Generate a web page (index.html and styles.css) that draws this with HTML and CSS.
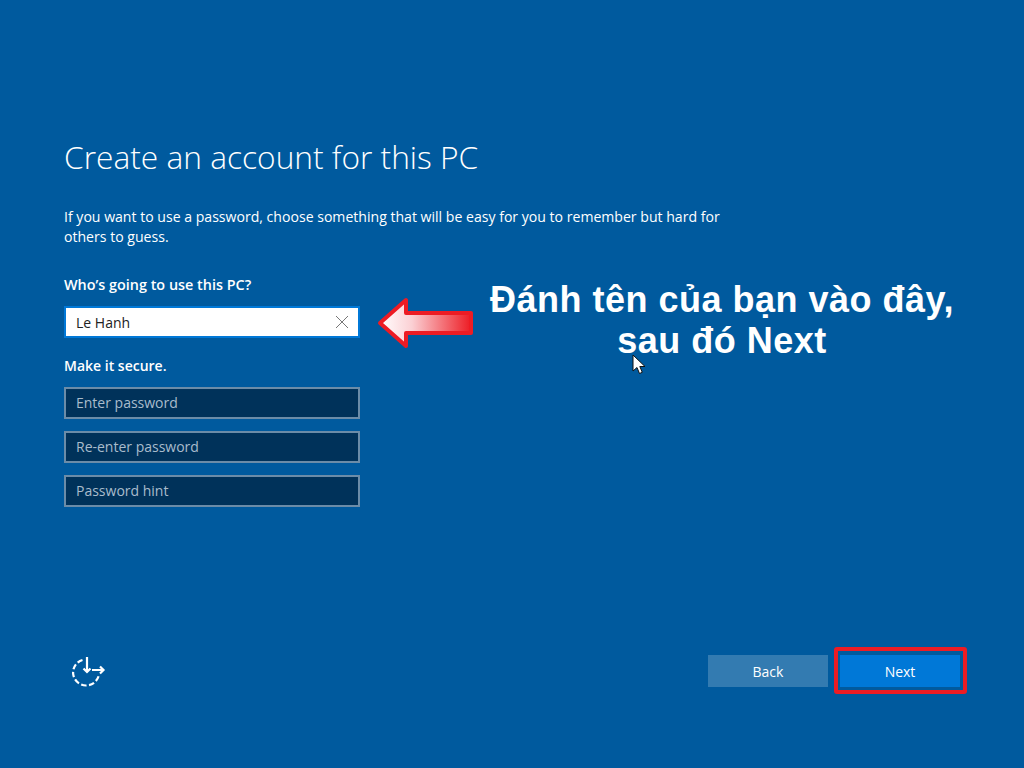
FILE: index.html
```html
<!DOCTYPE html>
<html lang="en">
<head>
<meta charset="utf-8">
<title>Create an account for this PC</title>
<link rel="stylesheet" href="styles.css">
</head>
<body>
<main class="screen">
  <section class="content">
    <h1 class="title">Create an account for this PC</h1>
    <p class="intro">If you want to use a password, choose something that will be easy for you to remember but hard for others to guess.</p>
    <h2 class="label label-who">Who’s going to use this PC?</h2>
    <div class="field field-active"><span class="value">Le Hanh</span>
      <svg class="clear" width="14" height="14" viewBox="0 0 14 14"><path d="M1 1l12 12M13 1L1 13" stroke="#777" stroke-width="1" fill="none"/></svg>
    </div>
    <h2 class="label label-secure">Make it secure.</h2>
    <div class="stack">
      <div class="field"><span class="hint">Enter password</span></div>
      <div class="field"><span class="hint">Re-enter password</span></div>
      <div class="field"><span class="hint">Password hint</span></div>
    </div>
  </section>
  <footer class="footer">
    <svg class="access" width="36" height="32" viewBox="0 0 36 32" fill="none" stroke="#fff" stroke-width="2.200">
      <path d="M12.500 5A13 13 0 1 0 29 19" stroke-dasharray="5.500 2.500"/>
      <path d="M17 2v15M13.500 13.500l3.500 3.500 3.500-3.500M22 15h11M30 11.500l3.500 3.500-3.500 3.500"/>
    </svg>
    <div class="buttons">
      <div class="btn btn-back">Back</div>
      <div class="btn btn-next">Next</div>
    </div>
  </footer>
</main>
<svg class="arrow" width="98" height="52" viewBox="0 0 98 52">
  <defs><linearGradient id="arrowfill" x1="0" x2="1" y1="0" y2="0"><stop offset="0" stop-color="#fff"/><stop offset="0.35" stop-color="#fbd0d4"/><stop offset="1" stop-color="#ed1c24"/></linearGradient></defs>
  <path d="M3 26L29 3v13h65v20H29v13z" fill="url(#arrowfill)" stroke="#ed1c24" stroke-width="4" stroke-linejoin="round"/>
</svg>
<div class="note">Đánh tên của bạn vào đây,<br>sau đó Next</div>
<svg class="cursor" width="14" height="21" viewBox="0 0 14 21"><path d="M1 1v16l4-3.500 2.500 6 2.800-1.200-2.500-5.800H13z" fill="#fff" stroke="#111" stroke-width="1"/></svg>
<div class="highlight"></div>
</body>
</html>
```
FILE: styles.css
```css
* { box-sizing: border-box; }
html, body { margin: 0; height: 768px; overflow: hidden; }
body { background: #005a9e; color: #fff; font-family: "Open Sans", "Noto Sans", sans-serif; position: relative; }
.screen { height: 768px; padding: 135px 64px 81px; display: flex; flex-direction: column; justify-content: space-between; }
.title { margin: 0; font-size: 31.7px; line-height: 44px; font-weight: 300; }
.intro { margin: 28px 0 0; width: 675px; font-size: 14.08px; line-height: 20px; }
.label { margin: 0; font-size: 14.4px; line-height: 20px; font-weight: 600; }
.label-who { margin-top: 28px; }
.label-secure { margin-top: 18px; font-size: 14px; }
.field { width: 296px; height: 32px; border: 2px solid #6b8ca8; background: #00325a; padding: 0 10px 1px; display: flex; align-items: center; justify-content: space-between; font-size: 14px; }
.field-active { margin-top: 11px; background: #fff; border-color: #0078d7; padding-bottom: 0; }
.value { color: #222; }
.hint { color: #a9bccc; }
.clear { margin-right: -1px; }
.stack { margin-top: 11px; display: flex; flex-direction: column; gap: 12px; }
.footer { display: flex; justify-content: space-between; align-items: center; padding-left: 6px; }
.access { display: block; }
.buttons { display: flex; gap: 12px; }
.btn { width: 120px; height: 32px; display: flex; align-items: center; justify-content: center; font-size: 14px; }
.btn-back { background: #337bb1; }
.btn-next { background: #0078d7; }
.arrow { position: absolute; left: 377px; top: 297px; }
.note { position: absolute; left: 472px; top: 279px; width: 500px; text-align: center; font-family: "Liberation Sans", Arial, sans-serif; font-weight: 700; font-size: 36px; line-height: 41px; letter-spacing: 0.5px; }
.cursor { position: absolute; left: 632px; top: 354px; }
.highlight { position: absolute; left: 834px; top: 647px; width: 133px; height: 47px; border: 4px solid #ed1c24; border-radius: 3px; }
```
